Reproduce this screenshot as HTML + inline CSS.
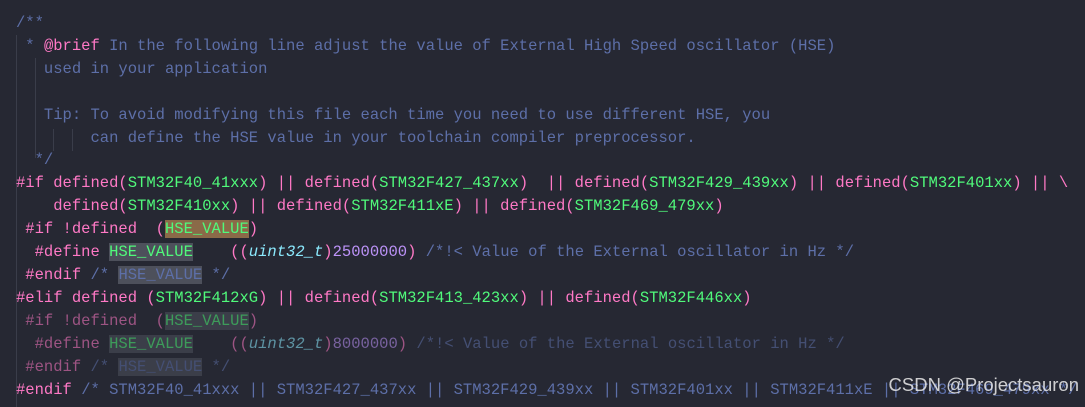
<!DOCTYPE html>
<html><head><meta charset="utf-8"><style>
html,body{margin:0;padding:0;background:#262833;width:1085px;height:404px;overflow:hidden}
pre{position:absolute;left:16px;top:12px;margin:0;font-family:"Liberation Mono",monospace;font-size:15.53px;line-height:22.9px;color:#6272a4;white-space:pre}
.p{color:#ff79c6}.g{color:#50fa7b}.c{color:#5d6fa8}.u{color:#8be9fd;font-style:italic}.n{color:#bd93f9}
.hb{background:#8a6a48}.hg{background:#4d505b}
.dim{opacity:.55}
.w{position:absolute;right:6px;top:374px;font-family:"Liberation Sans",sans-serif;font-size:18.5px;color:#ececec;opacity:.85}
.guide{position:absolute;width:1px;background:#3a3d4a}
</style></head><body>
<div class="guide" style="left:16px;top:35px;height:372px"></div>
<div class="guide" style="left:35px;top:58px;height:100px"></div>
<div class="guide" style="left:53px;top:129px;height:22px"></div>
<div class="guide" style="left:72px;top:129px;height:22px"></div>
<pre><span class="c">/**
 * </span><span class="p">@brief</span><span class="c"> In the following line adjust the value of External High Speed oscillator (HSE)
   used in your application

   Tip: To avoid modifying this file each time you need to use different HSE, you
        can define the HSE value in your toolchain compiler preprocessor.
  */</span>
<span class="p">#if defined(</span><span class="g">STM32F40_41xxx</span><span class="p">) || defined(</span><span class="g">STM32F427_437xx</span><span class="p">)  || defined(</span><span class="g">STM32F429_439xx</span><span class="p">) || defined(</span><span class="g">STM32F401xx</span><span class="p">) || \
    defined(</span><span class="g">STM32F410xx</span><span class="p">) || defined(</span><span class="g">STM32F411xE</span><span class="p">) || defined(</span><span class="g">STM32F469_479xx</span><span class="p">)</span>
<span class="p"> #if !defined  (</span><span class="g hb">HSE_VALUE</span><span class="p">)</span>
<span class="p">  #define </span><span class="g hg">HSE_VALUE</span>    <span class="p">((</span><span class="u">uint32_t</span><span class="p">)</span><span class="n">25000000</span><span class="p">)</span> <span class="c">/*!&lt; Value of the External oscillator in Hz */</span>
<span class="p"> #endif</span> <span class="c">/* <span class="hg">HSE_VALUE</span> */</span>
<span class="p">#elif defined (</span><span class="g">STM32F412xG</span><span class="p">) || defined(</span><span class="g">STM32F413_423xx</span><span class="p">) || defined(</span><span class="g">STM32F446xx</span><span class="p">)</span>
<span class="dim"><span class="p"> #if !defined  (</span><span class="g hg">HSE_VALUE</span><span class="p">)</span></span>
<span class="dim"><span class="p">  #define </span><span class="g hg">HSE_VALUE</span>    <span class="p">((</span><span class="u">uint32_t</span><span class="p">)</span><span class="n">8000000</span><span class="p">)</span> <span class="c">/*!&lt; Value of the External oscillator in Hz */</span></span>
<span class="dim"><span class="p"> #endif</span> <span class="c">/* <span class="hg">HSE_VALUE</span> */</span></span>
<span class="p">#endif</span> <span class="c">/* STM32F40_41xxx || STM32F427_437xx || STM32F429_439xx || STM32F401xx || STM32F411xE || STM32F469_479xx */</span></pre>
<div class="w">CSDN @Projectsauron</div>
</body></html>
